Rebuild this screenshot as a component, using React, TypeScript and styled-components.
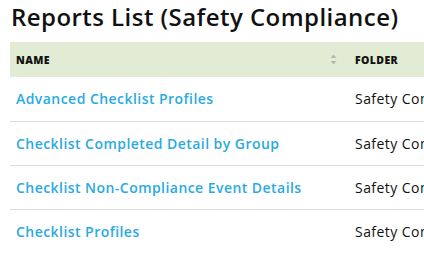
import React from 'react'
import styled, { createGlobalStyle } from 'styled-components'

const GlobalStyle = createGlobalStyle`
  body {
    margin: 0;
    font-family: "Open Sans", Lato, sans-serif;
    background: #fff;
    overflow: hidden;
  }
  * {
    box-sizing: border-box;
  }
`;

const Page = styled.div`
  padding: 0 0 0 10px;
  width: 424px;
  overflow: hidden;
`;

const Title = styled.h1`
  margin: 0;
  padding: 0 0 0 1px;
  height: 42px;
  line-height: 34px;
  font-size: 24px;
  font-weight: 600;
  letter-spacing: 0.45px;
  color: #111;
  white-space: nowrap;
`;

const Table = styled.table`
  border-collapse: collapse;
  width: 500px;
  table-layout: fixed;
`;

const HeadCell = styled.th<{ $width?: number }>`
  position: relative;
  width: ${p => (p.$width ? `${p.$width}px` : 'auto')};
  height: 35px;
  padding: 0 6px;
  background: #e2ecd4;
  text-align: left;
  font-size: 10.5px;
  font-weight: 800;
  letter-spacing: 0.4px;
  color: #111;
  text-transform: uppercase;
`;

const SortIcon = styled.svg`
  position: absolute;
  right: 12px;
  top: 12px;
`;

const Row = styled.tr`
  & + & td {
    border-top: 1px solid #dcdcdc;
  }
`;

const Cell = styled.td`
  height: 44px;
  padding: 0 6px;
  font-size: 14px;
  letter-spacing: 0.45px;
  white-space: nowrap;
  overflow: hidden;
  color: #111;
`;

const ReportLink = styled.a`
  color: #2aaae2;
  text-decoration: none;
  font-weight: 600;
`;

const reports = [
  'Advanced Checklist Profiles',
  'Checklist Completed Detail by Group',
  'Checklist Non-Compliance Event Details',
  'Checklist Profiles',
];

export default function App() {
  return (
    <Page>
      <GlobalStyle />
      <Title>Reports List (Safety Compliance)</Title>
      <Table>
        <thead>
          <tr>
            <HeadCell $width={339}>
              Name
              <SortIcon width="7" height="11" viewBox="0 0 7 11">
                <path d="M3.5 0.5L6.5 4H0.5Z" fill="#b5b9ae" />
                <path d="M3.5 10.5L6.5 7H0.5Z" fill="#b5b9ae" />
              </SortIcon>
            </HeadCell>
            <HeadCell>Folder</HeadCell>
          </tr>
        </thead>
        <tbody>
          {reports.map((name, i) => (
            <Row key={`report${i}`}>
              <Cell>
                <ReportLink href="#">{name}</ReportLink>
              </Cell>
              <Cell>Safety Compliance</Cell>
            </Row>
          ))}
        </tbody>
      </Table>
    </Page>
  );
}
